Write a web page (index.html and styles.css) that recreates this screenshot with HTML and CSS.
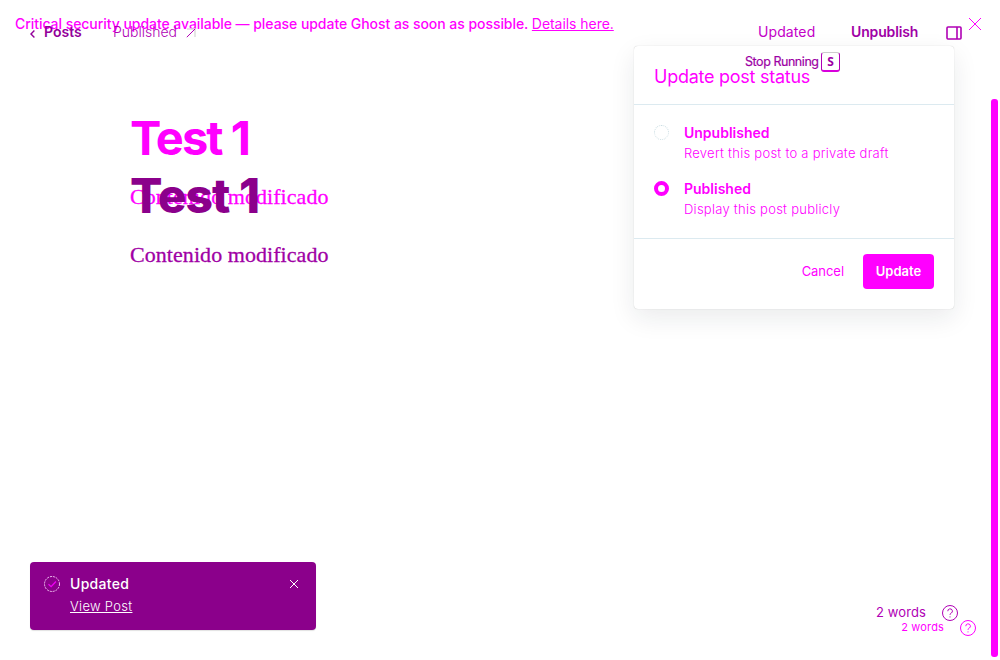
FILE: index.html
```html
<!DOCTYPE html>
<html lang="en">
<head>
<meta charset="utf-8">
<title>Ghost editor</title>
<link rel="stylesheet" href="styles.css">
</head>
<body>
<div class="screen">
  <section class="layer layer-back">
    <div class="banner">
      <p class="banner-text">Critical security update available — please update Ghost as soon as possible. <a class="banner-link">Details here.</a></p>
      <svg class="banner-close" viewBox="0 0 14 14"><path d="M1 1l12 12M13 1L1 13"/></svg>
    </div>
    <main class="post">
      <h1 class="post-title">Test 1</h1>
      <p class="post-body">Contenido modificado</p>
    </main>
    <footer class="wordcount">
      <span>2 words</span>
      <svg class="help" viewBox="0 0 16 16"><circle cx="8" cy="8" r="7.5"/><path d="M5.8 6.2a2.3 2.3 0 1 1 3.5 1.9C8.4 8.6 8 8.9 8 9.8M8 11.4v1"/></svg>
    </footer>
  </section>

  <section class="layer layer-front">
    <header class="toolbar">
      <svg class="chevron" viewBox="0 0 5 8"><path d="M4.4.6L1 4l3.4 3.4"/></svg>
      <span class="crumb">Posts</span>
      <span class="state">Published</span>
      <svg class="arrow" viewBox="0 0 10 10"><path class="arrow-head" d="M1 1h8v8"/><path d="M9 1L.8 9.2"/></svg>
      <span class="saved">Updated</span>
      <span class="unpublish">Unpublish</span>
      <svg class="panel-icon" viewBox="0 0 16 14"><rect x="1" y="1" width="14" height="12" rx="1"/><path d="M11 1v12"/></svg>
    </header>
    <main class="post">
      <h1 class="post-title">Test 1</h1>
      <p class="post-body">Contenido modificado</p>
    </main>
    <footer class="wordcount">
      <span>2 words</span>
      <svg class="help" viewBox="0 0 16 16"><circle cx="8" cy="8" r="7.5"/><path d="M5.8 6.2a2.3 2.3 0 1 1 3.5 1.9C8.4 8.6 8 8.9 8 9.8M8 11.4v1"/></svg>
    </footer>
  </section>

  <section class="dialog">
    <h2 class="dialog-title">Update post status</h2>
    <div class="options">
      <div class="option">
        <span class="radio"></span>
        <div><div class="option-name">Unpublished</div><div class="option-note">Revert this post to a private draft</div></div>
      </div>
      <div class="option">
        <span class="radio radio-on"></span>
        <div><div class="option-name">Published</div><div class="option-note">Display this post publicly</div></div>
      </div>
    </div>
    <div class="actions"><span class="cancel">Cancel</span><span class="update">Update</span></div>
  </section>

  <div class="hint"><span class="hint-text">Stop Running</span><kbd class="key">S</kbd></div>

  <aside class="toast">
    <svg class="toast-check" viewBox="0 0 16 16"><circle cx="8" cy="8" r="7.5"/><path d="M4.5 8.3l2.6 2.4 4.8-5.2"/></svg>
    <div class="toast-main"><div class="toast-title">Updated</div><a class="toast-link">View Post</a></div>
    <svg class="toast-close" viewBox="0 0 8 8"><path d="M0 0l8 8M8 0L0 8"/></svg>
  </aside>

  <div class="scrollbar"></div>
</div>
</body>
</html>
```

FILE: styles.css
```css
* { box-sizing: border-box; }
body { margin: 0; background: #fff; font-family: Inter, "Liberation Sans", sans-serif; color: #f0f; }
h1, h2, p { margin: 0; }
span, a, p, h1, h2, div { white-space: nowrap; }
svg { flex: none; fill: none; stroke: currentColor; stroke-width: 1; overflow: visible; }

.screen { position: relative; width: 1000px; height: 660px; overflow: hidden; }
.layer { position: absolute; inset: 0; display: flex; flex-direction: column; }
.layer-front { color: #b000b5; }

.banner { height: 48px; display: flex; align-items: center; justify-content: space-between; padding: 0 18px 0 15px; }
.banner-text { font-size: 14px; line-height: 20px; font-weight: 450; letter-spacing: -.05px; }
.banner-link { font-weight: 400; text-decoration: underline; }
.banner-close { width: 14px; height: 14px; }

.toolbar { height: 66px; display: flex; align-items: center; padding: 0 38px 0 30px; font-size: 14px; line-height: 20px; }
.chevron { width: 5px; height: 8px; margin-right: 9px; margin-top: 2px; stroke: #93009a; stroke-width: 1.4; }
.crumb { width: 69px; font-weight: 600; color: #93009a; margin-top: -2px; }
.state { width: 73px; font-weight: 300; margin-top: -2px; }
.arrow { width: 10px; height: 10px; }
.arrow-head { stroke: #ddd; stroke-width: 1.5; }
.saved { margin-left: auto; margin-top: -2px; width: 93px; color: #c400c8; letter-spacing: .1px; }
.unpublish { width: 95px; margin-top: -2px; font-weight: 600; color: #a000a6; letter-spacing: -.15px; }
.panel-icon { width: 16px; height: 14px; stroke-width: 1.6; }

.post { flex: 1; padding-left: 130px; }
.post-title { font-size: 47px; line-height: 58px; font-weight: 650; letter-spacing: -1.9px; }
.layer-back .post { padding-top: 61px; }
.layer-front .post { padding-top: 101px; }
.layer-front .post-title { font-size: 48px; font-weight: 800; color: #8b008b; letter-spacing: -1px; }
.post-body { font-family: "Liberation Serif", serif; font-size: 22px; line-height: 28px; letter-spacing: .06px; -webkit-text-stroke: .3px currentColor; }
.layer-back .post-body { margin-top: 16px; }
.layer-front .post-body { margin-top: 16px; color: #a000a5; }

.wordcount { display: flex; align-items: center; justify-content: flex-end; gap: 16px; font-size: 11px; line-height: 16px; padding: 0 24px 24px 0; font-weight: 400; letter-spacing: .15px; }
.layer-front .wordcount { font-size: 13px; padding: 0 42px 39px 0; letter-spacing: .1px; }
.wordcount span { margin-top: -2px; }
.help { width: 16px; height: 16px; }

.dialog { position: absolute; left: 634px; top: 46px; width: 320px; height: 263px; background: #fff; border-radius: 4px; box-shadow: 0 0 1px rgba(0,0,0,.25), 0 9px 26px rgba(20,35,40,.09); }
.dialog-title { height: 59px; padding: 18px 20px 0; border-bottom: 1px solid #dceaf0; font-size: 18px; line-height: 26px; font-weight: 430; letter-spacing: -.26px; }
.options { height: 134px; padding: 18px 20px 0; border-bottom: 1px solid #dceaf0; display: flex; flex-direction: column; gap: 16px; }
.option { display: flex; gap: 15px; height: 40px; }
.radio { width: 15px; height: 15px; margin-top: 2px; border-radius: 50%; border: 1px dotted #c9dce2; }
.radio-on { border: 4px solid #f0f; }
.option-name { font-size: 14px; line-height: 20px; font-weight: 600; }
.option-note { font-size: 13px; line-height: 20px; font-weight: 300; letter-spacing: .26px; }
.actions { display: flex; justify-content: flex-end; align-items: center; gap: 19px; padding: 15px 20px 0; font-size: 13px; line-height: 17px; }
.cancel { letter-spacing: -.05px; margin-top: -1px; }
.update { width: 71px; height: 35px; border-radius: 4px; background: #f0f; color: #fff; font-weight: 600; display: flex; align-items: center; justify-content: center; padding-bottom: 1px; }

.hint { position: absolute; left: 745px; top: 52px; display: flex; gap: 2px; color: #9c00a4; }
.hint-text { width: 74px; font-size: 12.5px; line-height: 20px; letter-spacing: -.45px; -webkit-text-stroke: .2px currentColor; }
.key { width: 19px; height: 20px; border: 1px solid #b000b5; border-top-color: #ccc; border-bottom: 2px solid #d800dc; border-radius: 3px; font: 700 12px/17px "Noto Sans", sans-serif; text-align: center; }

.toast { position: absolute; left: 30px; top: 562px; width: 286px; height: 68px; background: #8b008b; border-radius: 4px; color: #fff; display: flex; padding: 12px 18px 0 14px; box-shadow: 0 1px 1px rgba(0,0,0,.12); }
.toast-check { width: 16px; height: 16px; margin: 2px 10px 0 0; color: #e000e4; }
.toast-check circle { stroke: #f3c8f3; stroke-dasharray: 2 1; }
.toast-check path { stroke: #f000f4; stroke-width: 1.3; }
.toast-main { flex: 1; }
.toast-title { font-size: 14px; line-height: 20px; font-weight: 500; letter-spacing: .3px; }
.toast-link { display: block; font-size: 13px; line-height: 25px; font-weight: 300; letter-spacing: .3px; text-decoration: underline; }
.toast-close { width: 8px; height: 8px; margin-top: 6px; }

.scrollbar { position: absolute; left: 991px; top: 99px; width: 7px; height: 558px; border-radius: 3px; background: #f0f; }
```
